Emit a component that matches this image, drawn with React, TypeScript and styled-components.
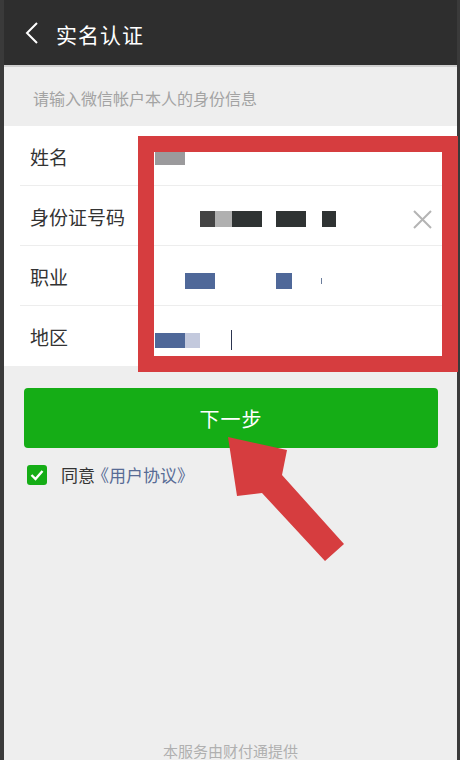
import React from 'react';
import styled, { createGlobalStyle } from 'styled-components';

const GlobalStyle = createGlobalStyle`
  html, body {
    margin: 0;
    padding: 0;
    background: #3a3a3a;
  }
  body {
    font-family: "Noto Sans CJK SC", "Noto Sans", sans-serif;
  }
`;

const Frame = styled.div`
  position: relative;
  width: 460px;
  height: 760px;
  overflow: hidden;
  background: #3a3a3a;
  padding-left: 4px;
  box-sizing: border-box;
`;

const Screen = styled.div`
  width: 453px;
  height: 760px;
  background: #eeeeee;
  display: flex;
  flex-direction: column;
`;

const TopBar = styled.header`
  height: 65px;
  background: #2e2e2e;
  border-bottom: 2px solid #cfcfcf;
  display: flex;
  align-items: center;
  padding-left: 17px;
  gap: 13px;
  flex-shrink: 0;
`;

const BackButton = styled.button`
  width: 22px;
  height: 28px;
  padding: 0;
  border: none;
  background: transparent;
  display: flex;
  align-items: center;
  justify-content: center;
`;

const Title = styled.h1`
  margin: 0 0 -3px;
  font-size: 21px;
  font-weight: 400;
  color: #ffffff;
  letter-spacing: 1px;
`;

const Hint = styled.p`
  margin: 0;
  height: 59px;
  display: flex;
  align-items: center;
  padding-left: 29px;
  padding-top: 2px;
  box-sizing: border-box;
  font-size: 16px;
  color: #a3a3a3;
  flex-shrink: 0;
`;

const List = styled.div`
  background: #ffffff;
  display: flex;
  flex-direction: column;
`;

const Row = styled.div<{ $last?: boolean }>`
  position: relative;
  height: 60px;
  display: flex;
  align-items: center;
  padding-left: 26px;
  padding-right: 25px;
  box-sizing: border-box;
  &::after {
    content: '';
    display: ${({ $last }) => ($last ? 'none' : 'block')};
    position: absolute;
    left: 16px;
    right: 0;
    bottom: 0;
    height: 1px;
    background: #ededed;
  }
`;

const Label = styled.span`
  width: 125px;
  flex-shrink: 0;
  font-size: 19px;
  color: #333333;
`;

const Value = styled.div<{ $shift: number }>`
  flex: 1;
  display: flex;
  align-items: center;
  height: 16px;
  margin-top: ${({ $shift }) => $shift}px;
`;

const Mask = styled.span<{ $w: number; $h?: number; $c: string; $gap?: number }>`
  display: block;
  width: ${({ $w }) => $w}px;
  height: ${({ $h }) => $h ?? 16}px;
  background: ${({ $c }) => $c};
  margin-left: ${({ $gap }) => $gap ?? 0}px;
  flex-shrink: 0;
`;

const ClearButton = styled.button`
  margin-left: auto;
  width: 20px;
  height: 20px;
  padding: 0;
  border: none;
  background: transparent;
  display: flex;
  align-items: center;
  justify-content: center;
`;

const Body = styled.div`
  padding: 22px 19px 0 20px;
  display: flex;
  flex-direction: column;
`;

const NextButton = styled.button`
  height: 60px;
  border: none;
  border-radius: 4px;
  background: #15ad16;
  color: #ffffff;
  font-family: inherit;
  font-size: 20px;
  letter-spacing: 1px;
`;

const Agree = styled.label`
  margin-top: 14px;
  padding-left: 3px;
  display: flex;
  align-items: center;
  gap: 14px;
  font-size: 17px;
  color: #333333;
`;

const CheckBox = styled.span`
  width: 20px;
  height: 20px;
  border-radius: 3px;
  background: #15ad16;
  display: flex;
  align-items: center;
  justify-content: center;
`;

const Link = styled.span`
  color: #576b95;
  margin-left: -3px;
`;

const Footer = styled.footer`
  margin-top: auto;
  margin-bottom: 0;
  text-align: center;
  font-size: 15px;
  line-height: 18px;
  color: #b0b0b0;
`;

const MarkBox = styled.div`
  position: absolute;
  left: 138px;
  top: 136px;
  width: 320px;
  height: 236px;
  border: 16px solid #d63d3f;
  box-sizing: border-box;
  pointer-events: none;
`;

const Arrow = styled.svg`
  position: absolute;
  left: 0;
  top: 0;
  pointer-events: none;
`;

const Chevron = () => (
  <svg width="14" height="24" viewBox="0 0 14 24">
    <path d="M12 2 L2 12 L12 22" fill="none" stroke="#ffffff" strokeWidth="2" />
  </svg>
);

const Cross = () => (
  <svg width="19" height="19" viewBox="0 0 19 19">
    <path d="M1 1 L18 18 M18 1 L1 18" stroke="#b4b4b4" strokeWidth="2" />
  </svg>
);

const Tick = () => (
  <svg width="14" height="12" viewBox="0 0 14 12">
    <path d="M1.5 6 L5.5 10 L12.5 2" fill="none" stroke="#ffffff" strokeWidth="2.4" />
  </svg>
);

export default function App() {
  return (
    <>
      <GlobalStyle />
      <Frame>
        <Screen>
          <TopBar>
            <BackButton aria-label="返回">
              <Chevron />
            </BackButton>
            <Title>实名认证</Title>
          </TopBar>
          <Hint>请输入微信帐户本人的身份信息</Hint>
          <List>
            <Row>
              <Label>姓名</Label>
              <Value $shift={4}>
                <Mask $w={30} $h={14} $c="#9b9a9c" />
              </Value>
            </Row>
            <Row>
              <Label>身份证号码</Label>
              <Value $shift={6}>
                <Mask $w={15} $c="#444444" $gap={45} />
                <Mask $w={17} $c="#b0b0b0" />
                <Mask $w={30} $c="#2f3333" />
                <Mask $w={30} $c="#2f3333" $gap={14} />
                <Mask $w={14} $c="#2f3333" $gap={16} />
                <ClearButton aria-label="清除">
                  <Cross />
                </ClearButton>
              </Value>
            </Row>
            <Row>
              <Label>职业</Label>
              <Value $shift={10}>
                <Mask $w={30} $c="#4f6899" $gap={30} />
                <Mask $w={16} $c="#4f6899" $gap={61} />
                <Mask $w={1} $h={6} $c="#6b7d9c" $gap={29} />
              </Value>
            </Row>
            <Row $last>
              <Label>地区</Label>
              <Value $shift={8}>
                <Mask $w={30} $h={15} $c="#4f6899" />
                <Mask $w={15} $h={15} $c="#c3c9dd" />
                <Mask $w={1} $h={20} $c="#2c3550" $gap={31} />
              </Value>
            </Row>
          </List>
          <Body>
            <NextButton>下一步</NextButton>
            <Agree>
              <CheckBox>
                <Tick />
              </CheckBox>
              <span>
                同意<Link>《用户协议》</Link>
              </span>
            </Agree>
          </Body>
          <Footer>本服务由财付通提供</Footer>
        </Screen>
        <MarkBox />
        <Arrow width="460" height="760" viewBox="0 0 460 760">
          <polygon
            points="228,437 287,450 282,475 344,544 325,561 262,493 237,496"
            fill="#d63d3f"
          />
        </Arrow>
      </Frame>
    </>
  );
}
